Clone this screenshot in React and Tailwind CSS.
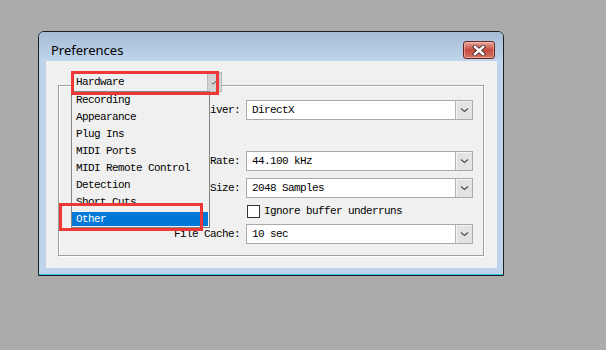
export default function App() {
  const mono = "font-['Liberation_Mono',monospace] text-[11px] tracking-[-0.6px] text-black";
  const items = ["Recording", "Appearance", "Plug Ins", "MIDI Ports", "MIDI Remote Control", "Detection", "Short Cuts", "Other"];

  const Chevron = () => (
    <svg width="9" height="6" viewBox="0 0 9 6" className="block">
      <path d="M1 1.5 L4.5 4.5 L8 1.5" fill="none" stroke="#4a4a4a" strokeWidth="1.1" />
    </svg>
  );

  const Combo = ({ value }) => (
    <div className="w-[227px] h-[20px] border border-[#a9a9a9] bg-white flex items-stretch">
      <div className={`${mono} flex-1 pl-[5px] leading-[18px] whitespace-pre`}>{value}</div>
      <div className="w-[17px] bg-[#e3e3e3] border-l border-[#b5b5b5] shadow-[inset_1px_1px_0_#f4f4f4] flex items-center justify-center">
        <Chevron />
      </div>
    </div>
  );

  const Row = ({ label, children, className = "" }) => (
    <div className={`flex items-center ${className}`}>
      <div className={`${mono} w-[181px] text-right whitespace-pre leading-[20px]`}>{label}</div>
      <div className="ml-[6px]">{children}</div>
    </div>
  );

  return (
    <div className="w-[606px] h-[350px] bg-[#ababab] overflow-hidden pt-[31px] pl-[38px]">
      <div className="w-[466px] h-[245px] border border-[#1e1e1e] rounded-t-[6px] bg-[#bdd4ec] shadow-[inset_0_-1px_0_#38c2de] flex flex-col">
        {/* title bar */}
        <div className="h-[29px] shrink-0 rounded-t-[5px] bg-gradient-to-b from-[#a6bcd5] to-[#bfd5ed] flex items-start justify-between pl-[12px] pr-[8px]">
          <div className="pt-[9px] font-['Noto_Sans',sans-serif] text-[13px] leading-[18px] text-black">Preferences</div>
          <div className="mt-[9px] w-[32px] h-[18px] rounded-[3px] border border-[#6b2620] bg-gradient-to-b from-[#e6a79d] via-[#c64a3c] to-[#d27766] shadow-[inset_0_0_0_1px_rgba(255,220,210,0.45)] flex items-center justify-center">
            <svg width="14" height="11" viewBox="0 0 14 11">
              <path d="M3 2 L11 9 M11 2 L3 9" stroke="#5a3a38" strokeWidth="4.4" strokeLinecap="square" />
              <path d="M3 2 L11 9 M11 2 L3 9" stroke="#ffffff" strokeWidth="2.4" strokeLinecap="square" />
            </svg>
          </div>
        </div>
        {/* client */}
        <div className="pl-[7px]">
          <div className="relative w-[451px] h-[207px] bg-[#f0f0f0] pt-[24px] pl-[12px]">
            {/* group box */}
            <div className="w-[426px] h-[171px] border border-[#a0a0a0] shadow-[inset_1px_1px_0_#ffffff,1px_1px_0_#ffffff] flex flex-col pt-[14px]">
              <Row label="Audio Driver:"><Combo value="DirectX" /></Row>
              <Row label="Sample Rate:" className="mt-[31px]"><Combo value="44.100 kHz" /></Row>
              <Row label="Buffer Size:" className="mt-[7px]"><Combo value="2048 Samples" /></Row>
              <div className="flex items-center mt-[7px] pl-[188px] h-[13px]">
                <div className="w-[13px] h-[13px] border border-[#333333] bg-white" />
                <div className={`${mono} ml-[4px] leading-[13px] whitespace-pre`}>Ignore buffer underruns</div>
              </div>
              <Row label="File Cache:" className="mt-[6px]"><Combo value="10 sec" /></Row>
            </div>

            {/* open dropdown (overlay) */}
            <div className="absolute left-[25px] top-[11px] w-[151px] h-[20px] bg-[#f0f0f0] border-l border-[#848484] flex">
              <div className={`${mono} flex-1 pl-[4px] leading-[21px]`}>Hardware</div>
              <div className="w-[15px] bg-[#d3d3d3] border border-[#bcbcbc] flex items-center justify-center">
                <svg width="7" height="6" viewBox="0 0 7 6">
                  <path d="M1 4.5 L2.5 5 L6 1" fill="none" stroke="#505050" strokeWidth="1" />
                </svg>
              </div>
            </div>
            <div className="absolute left-[25px] top-[30px] w-[139px] h-[137px] overflow-hidden bg-[#f0f0f0] border border-[#848484] flex flex-col">
              {items.map((it) => (
                <div key={it} className="h-[17px] shrink-0 pt-[1px]">
                  <div className={`${mono} h-[14px] leading-[15px] pl-[4px] mr-[1px] whitespace-pre ${it === "Other" ? "bg-[#0078d7] !text-white" : ""}`}>
                    {it}
                  </div>
                </div>
              ))}
            </div>

            {/* annotation boxes */}
            <div className="absolute left-[25px] top-[10px] w-[148px] h-[24px] border-[3px] border-[#ee3737]" />
            <div className="absolute left-[13px] top-[142px] w-[144px] h-[28px] border-[3px] border-[#ee3737]" />
          </div>
        </div>
      </div>
    </div>
  );
}
